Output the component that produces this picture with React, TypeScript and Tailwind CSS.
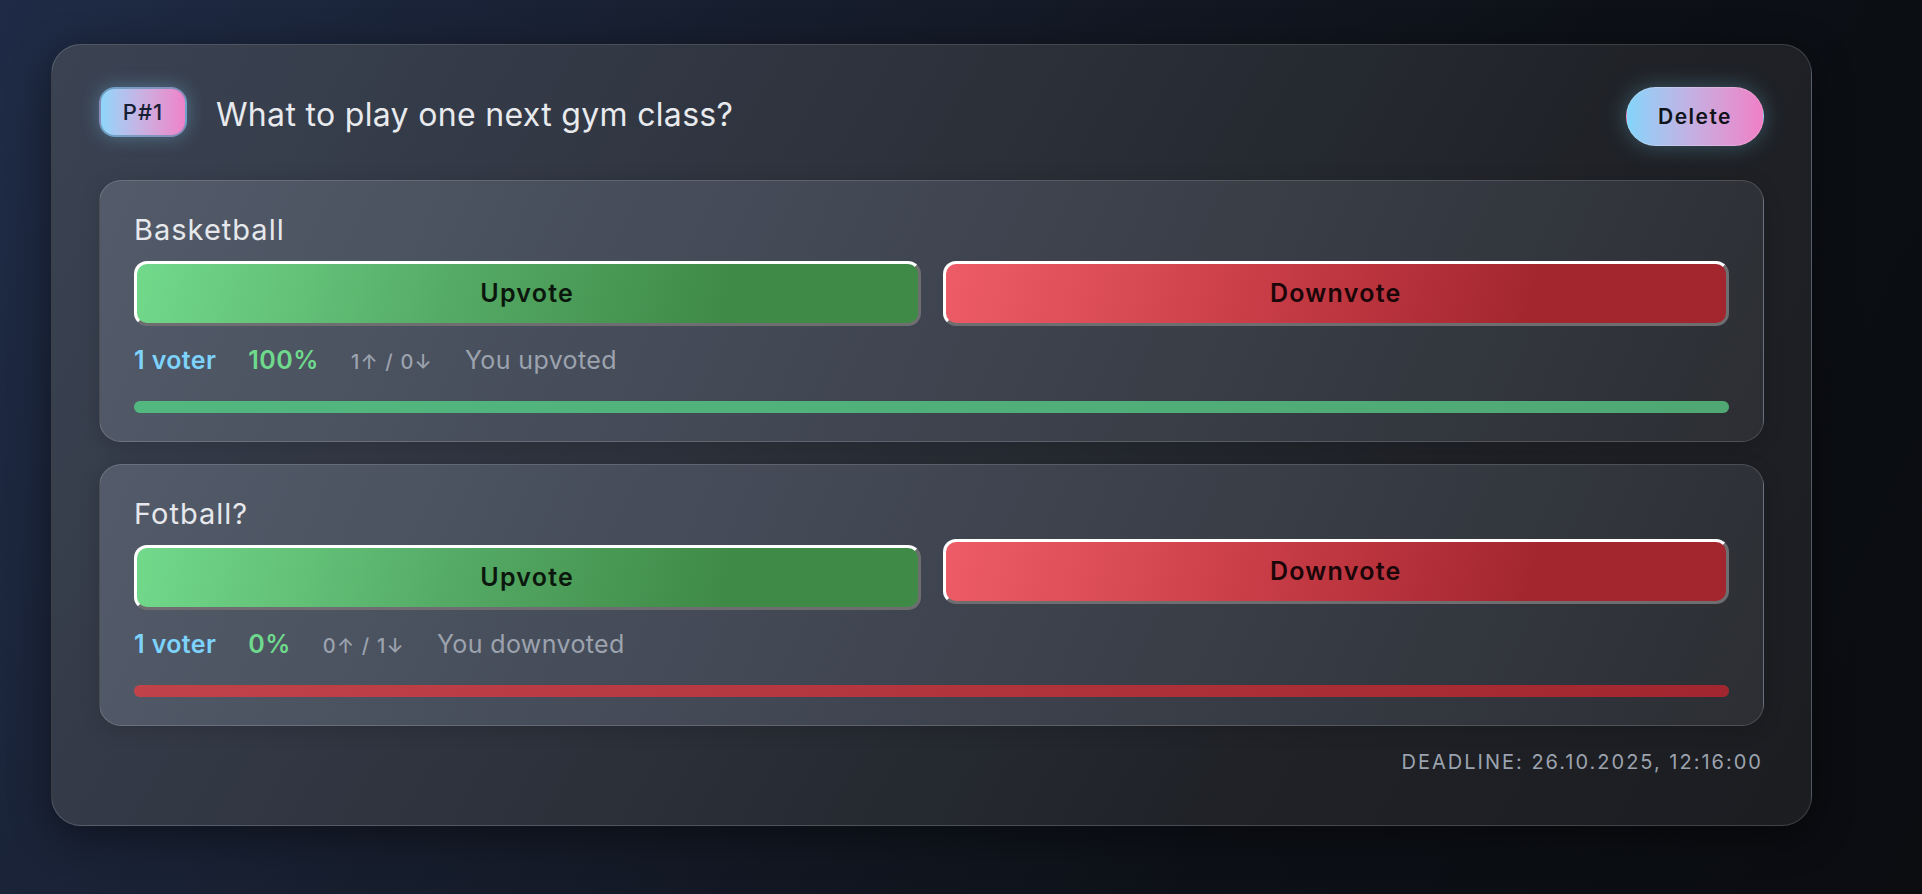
import React from "react";

type Option = {
  id: number;
  label: string;
  voters: number;
  up: number;
  down: number;
  myVote: "up" | "down";
  hoverDown?: boolean;
};

const options: Option[] = [
  { id: 1, label: "Basketball", voters: 1, up: 1, down: 0, myVote: "up" },
  { id: 2, label: "Fotball?", voters: 1, up: 0, down: 1, myVote: "down", hoverDown: true },
];

function OptionCard({ option }: { option: Option }) {
  const pct = option.up + option.down > 0 ? Math.round((option.up / (option.up + option.down)) * 100) : 0;
  const positive = pct >= 50;

  return (
    <div className="rounded-[22px] border border-white/15 bg-[linear-gradient(115deg,#535b6a_0%,#414753_45%,#2c2e33_100%)] px-[34px] pt-[33px] pb-[28px] shadow-[0_4px_20px_rgba(0,0,0,0.15)]">
      <h3 className="text-[29px] leading-8 text-[#e6e8ec] tracking-[0.035em]">{option.label}</h3>

      <div className="mt-[15px] grid grid-cols-2 gap-[22px]">
        <button className="h-[65px] rounded-[13px] border-[3px] border-t-white border-l-white border-r-[#6e6e70] border-b-[#6e6e70] bg-[linear-gradient(105deg,#72d98b_0%,#55ab66_40%,#3f8a47_75%,#3f8a47_100%)] text-[25px] font-semibold tracking-[0.05em] text-[#0b170d]">
          Upvote
        </button>
        <button
          className={`h-[65px] rounded-[13px] border-[3px] border-t-white border-l-white border-r-[#6e6e70] border-b-[#6e6e70] bg-[linear-gradient(105deg,#ee5d67_0%,#c93d47_40%,#a3262f_75%,#a3262f_100%)] text-[25px] font-semibold tracking-[0.05em] text-[#1a0608] ${
            option.hoverDown ? "-translate-y-[6px]" : ""
          }`}
        >
          Downvote
        </button>
      </div>

      <div className="mt-[18px] flex items-baseline gap-8 leading-8">
        <span className="text-[25px] font-semibold tracking-[0.015em] text-[#7dd3fc]">
          {option.voters} voter
        </span>
        <span className="text-[25px] font-semibold tracking-[0.02em] text-[#6fd98c]">{pct}%</span>
        <span className="text-[20px] font-medium tracking-[0.06em] text-[#9ca3af]">
          {option.up}↑ / {option.down}↓
        </span>
        <span className="text-[25px] tracking-[0.015em] text-[#9ca3af]">
          {option.myVote === "up" ? "You upvoted" : "You downvoted"}
        </span>
      </div>

      <div className="mt-[23px] h-3 rounded-full bg-white/10">
        <div
          className={`h-3 rounded-full ${
            positive
              ? "bg-gradient-to-r from-[#52b87f] to-[#4fa874]"
              : "bg-gradient-to-r from-[#c2424a] to-[#a2262f]"
          }`}
          style={{ width: "100%" }}
        />
      </div>
    </div>
  );
}

export default function App() {
  return (
    <div
      className="min-h-screen bg-[linear-gradient(115deg,#1f2b46_0%,#161d2c_35%,#0d1016_70%,#0a0c10_100%)] pl-[51px] pt-[44px] pb-10"
      style={{ fontFamily: "Inter, 'Noto Sans', sans-serif" }}
    >
      <div className="w-[1761px] rounded-[30px] border border-white/15 bg-[linear-gradient(120deg,#3b4353_0%,#2d323c_40%,#1f2126_75%,#1b1d21_100%)] px-[47px] pt-[42px] pb-[51px] shadow-[0_10px_40px_rgba(0,0,0,0.45)]">
        {/* Header */}
        <div className="flex items-start justify-between">
          <div className="flex items-start gap-[29px]">
            <span className="flex h-[50px] w-[88px] items-center justify-center rounded-[16px] border-2 border-[#5d8db0]/70 bg-gradient-to-r from-[#8fd6fb] to-[#ee82c8] text-[22px] font-medium tracking-[0.05em] text-[#172033] shadow-[0_0_18px_rgba(125,211,252,0.35)]">
              P#1
            </span>
            <h2 className="mt-[8px] text-[32px] leading-10 tracking-[0.01em] text-[#e8eaee]">
              What to play one next gym class?
            </h2>
          </div>
          <button className="h-[59px] w-[138px] rounded-full border border-white/20 bg-gradient-to-r from-[#82d4fb] to-[#ef7fc6] text-[21px] font-semibold tracking-[0.07em] text-[#10131a] shadow-[0_0_22px_rgba(125,211,252,0.3)]">
            Delete
          </button>
        </div>

        {/* Options */}
        <div className="mt-[34px] flex flex-col gap-[22px]">
          {options.map((o) => (
            <OptionCard key={o.id} option={o} />
          ))}
        </div>

        <div className="mt-6 flex justify-end pr-[1px]">
          <span className="text-[20px] leading-6 uppercase tracking-[0.1em] text-[#9ca3af]">
            Deadline: 26.10.2025, 12:16:00
          </span>
        </div>
      </div>
    </div>
  );
}
